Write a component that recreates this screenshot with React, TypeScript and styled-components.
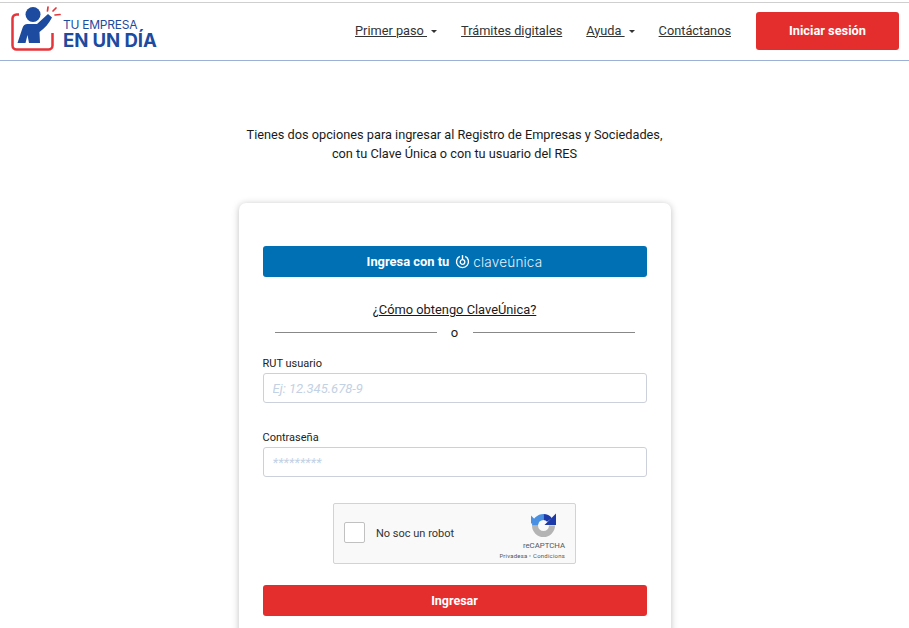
import styled, { createGlobalStyle } from "styled-components"

const Global = createGlobalStyle`
    html, body {
        margin: 0;
        height: 628px;
        overflow: hidden;
        background: #fff;
        font-family: Roboto, "Liberation Sans", sans-serif;
        color: #1a1a1a;
    }
`

const TopLine = styled.div`
    height: 2px;
    background: #fff;
    border-bottom: 1px solid #cfcfcf;
`

const Header = styled.header`
    display: flex;
    align-items: center;
    justify-content: space-between;
    height: 56px;
    padding: 0 10px 1px 11px;
    border-bottom: 1px solid #9db0d6;
`

const Logo = styled.div`
    display: flex;
    align-items: center;
    gap: 2px;
`

const LogoText = styled.div`
    display: flex;
    flex-direction: column;
    color: #1c4ba0;
    padding-top: 5px;
`

const LogoSmall = styled.span`
    font: 400 12px/13px Inter, sans-serif;
    letter-spacing: -0.25px;
`

const LogoBig = styled.span`
    font: 700 18.6px/19px Inter, sans-serif;
    letter-spacing: -0.1px;
    white-space: nowrap;
`

const Nav = styled.nav`
    display: flex;
    align-items: center;
`

const NavLink = styled.a`
    font-size: 12.75px;
    color: #333;
    text-decoration: underline;
    margin: 0 24px 2px 0;
    white-space: pre;
`

const Caret = styled.i`
    display: inline-block;
    width: 0;
    height: 0;
    margin-left: 4px;
    vertical-align: 2px;
    border-top: 3.5px solid #333;
    border-left: 3px solid transparent;
    border-right: 3px solid transparent;
`

const LoginButton = styled.button`
    width: 143px;
    height: 38px;
    margin-left: 1px;
    padding: 0 0 2px;
    border: 0;
    border-radius: 3px;
    background: #e42e2d;
    color: #fff;
    font: 700 12.8px Roboto, sans-serif;
`

const Main = styled.main`
    display: flex;
    flex-direction: column;
    align-items: center;
`

const Intro = styled.p`
    margin: 64px 0 40px;
    font-size: 12.75px;
    line-height: 19px;
    text-align: center;
    color: #1a1a1a;
`

const Card = styled.section`
    width: 384px;
    padding: 43px 24px 40px;
    background: #fff;
    border-radius: 7px;
    box-shadow: 0 1px 7px rgba(0, 0, 0, 0.25);
    display: flex;
    flex-direction: column;
`

const WideButton = styled.button<{ $color: string; $size: number }>`
    height: 31px;
    border: 0;
    border-radius: 3px;
    background: ${p => p.$color};
    color: #fff;
    font: 700 ${p => p.$size}px Roboto, sans-serif;
    display: flex;
    align-items: center;
    justify-content: center;
    gap: 6px;
`

const ClaveText = styled.span`
    margin-left: -3px;
    font: 300 13.5px Inter, sans-serif;
    letter-spacing: 0.2px;
    opacity: 0.9;
`

const HelpLink = styled.a`
    margin-top: 24px;
    font-size: 12.85px;
    line-height: 17px;
    text-align: center;
    text-decoration: underline;
    color: #1a1a1a;
`

const Divider = styled.div`
    display: flex;
    align-items: center;
    margin: 6px 12px 0;
    height: 16px;
    font-size: 13px;
    &::before, &::after {
        content: "";
        flex: 1;
        height: 1px;
        background: #888;
    }
`

const DividerLabel = styled.span`
    width: 36px;
    text-align: center;
`

const Field = styled.label<{ $gap: number }>`
    display: flex;
    flex-direction: column;
    margin-top: ${p => p.$gap}px;
    font-size: 11px;
    line-height: 14px;
    color: #222;
`

const Input = styled.input`
    height: 28px;
    margin-top: 2px;
    padding: 0 9px;
    border: 1px solid #ccd0da;
    border-radius: 3px;
    font: italic 13px Roboto, sans-serif;
    &::placeholder {
        color: #c3d1e4;
        opacity: 1;
    }
`

const CaptchaBox = styled.div`
    align-self: center;
    box-sizing: border-box;
    width: 243px;
    height: 61px;
    margin-top: 26px;
    padding: 0 10px;
    background: #f9f9f9;
    border: 1px solid #d3d3d3;
    border-radius: 2px;
    display: flex;
    align-items: center;
    justify-content: space-between;
`

const CaptchaLeft = styled.div`
    display: flex;
    align-items: center;
    gap: 11px;
    font-size: 11px;
    color: #333;
`

const CheckBox = styled.span`
    width: 19px;
    height: 19px;
    margin-bottom: 3px;
    background: #fff;
    border: 1px solid #c1c1c1;
    border-radius: 2px;
`

const CaptchaRight = styled.div`
    display: flex;
    flex-direction: column;
    align-items: flex-end;
    color: #555;
`

const CaptchaLogo = styled.svg`
    align-self: flex-end;
    margin-right: 9px;
    margin-top: 5px;
`

const CaptchaName = styled.span`
    font-size: 7.8px;
    line-height: 10px;
    margin-top: 3px;
`

const CaptchaTerms = styled.span`
    font-size: 6px;
    line-height: 9px;
    letter-spacing: 0.2px;
`

const SubmitButton = styled(WideButton)`
    margin-top: 21px;
    flex: none;
`

function LogoMark() {
    return (
        <svg width="50" height="50" viewBox="0 1 50 50">
            <path d="M8 9.500H5.500a4 4 0 0 0-4 4V40.500a4 4 0 0 0 4 4h32a4 4 0 0 0 4-4V28"
                fill="none" stroke="#e5343a" strokeWidth="2.500" />
            <circle cx="22" cy="9.500" r="7.500" fill="#1c4ba0" />
            <path d="M6.500 38l5-15c.8-2.600 2.500-4 5-4H26l11-10 4 3.500c-3 6-7.500 11-12.500 14.500L29 38H18l-1.500-8-2 8z" fill="#1c4ba0" />
            <path d="M37 2l-.5 4M45 3l-3 3M49 9.500l-5 .5" stroke="#e5343a" strokeWidth="1.700" strokeLinecap="round" />
        </svg>
    )
}

function ClaveIcon() {
    return (
        <svg width="15" height="15" viewBox="0 0 15 15" fill="none" stroke="#fff">
            <path d="M4.800 2.300a6 6 0 1 0 5.400 0" strokeWidth="1.400" />
            <circle cx="7.500" cy="8" r="2.300" strokeWidth="1.300" />
            <path d="M7.500 1v4" strokeWidth="1.400" />
        </svg>
    )
}

function RecaptchaIcon() {
    return (
        <CaptchaLogo width="25" height="26" viewBox="0 0 25 26">
            <path d="M21 13.500a8.500 8.500 0 0 1-17 0" fill="none" stroke="#b4b4b4" strokeWidth="6" />
            <path d="M4 13.500A8.500 8.500 0 0 1 12.500 5" fill="none" stroke="#4a90e2" strokeWidth="6" />
            <path d="M0 3.500l8 8H0z" fill="#4a90e2" />
            <path d="M12.500 5c2.500 0 4.500 1 6 3" fill="none" stroke="#1c3aa9" strokeWidth="6" />
            <path d="M25 1.500V13H13.500z" fill="#1c3aa9" />
        </CaptchaLogo>
    )
}

export default function App() {
    return <>
        <Global />
        <TopLine />
        <Header>
            <Logo>
                <LogoMark />
                <LogoText>
                    <LogoSmall>TU EMPRESA</LogoSmall>
                    <LogoBig>EN UN DÍA</LogoBig>
                </LogoText>
            </Logo>
            <Nav>
                <NavLink>Primer paso <Caret /></NavLink>
                <NavLink>Trámites digitales</NavLink>
                <NavLink>Ayuda <Caret /></NavLink>
                <NavLink>Contáctanos</NavLink>
                <LoginButton>Iniciar sesión</LoginButton>
            </Nav>
        </Header>
        <Main>
            <Intro>
                Tienes dos opciones para ingresar al Registro de Empresas y Sociedades,<br />
                con tu Clave Única o con tu usuario del RES
            </Intro>
            <Card>
                <WideButton $color="#0070b5" $size={12.9}>
                    Ingresa con tu <ClaveIcon /><ClaveText>claveúnica</ClaveText>
                </WideButton>
                <HelpLink>¿Cómo obtengo ClaveÚnica?</HelpLink>
                <Divider><DividerLabel>o</DividerLabel></Divider>
                <Field $gap={17}>
                    RUT usuario
                    <Input placeholder="Ej: 12.345.678-9" />
                </Field>
                <Field $gap={28}>
                    Contraseña
                    <Input placeholder="*********" />
                </Field>
                <CaptchaBox>
                    <CaptchaLeft><CheckBox />No soc un robot</CaptchaLeft>
                    <CaptchaRight>
                        <RecaptchaIcon />
                        <CaptchaName>reCAPTCHA</CaptchaName>
                        <CaptchaTerms>Privadesa ꞏ Condicions</CaptchaTerms>
                    </CaptchaRight>
                </CaptchaBox>
                <SubmitButton $color="#e42e2d" $size={12.5}>Ingresar</SubmitButton>
            </Card>
        </Main>
    </>
}
